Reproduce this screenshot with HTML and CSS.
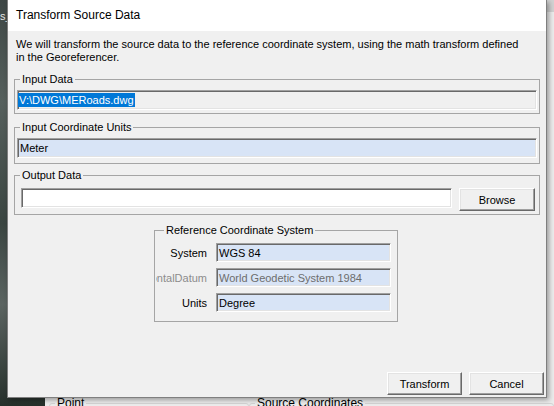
FILE: index.html
```html
<!DOCTYPE html>
<html lang="en">
    <head>
        <meta charset="UTF-8">
        <title>Transform Source Data</title>
        <link rel="stylesheet" href="styles.css">
    </head>

    <body>
        <div class="desktop">
            <span class="desk-label">s_</span>

            <div class="back-window">
                <div class="back-row">
                    <fieldset class="back-group back-point"><legend>Point</legend></fieldset>
                    <fieldset class="back-group back-source"><legend>Source Coordinates</legend></fieldset>
                </div>
            </div>

            <div class="dialog">
                <div class="titlebar">Transform Source Data</div>
                <div class="dialog-body">
                    <p class="intro">We will transform the source data to the reference coordinate system, using the math transform defined<br>in the Georeferencer.</p>

                    <fieldset class="group" id="input-data">
                        <legend>Input Data</legend>
                        <div class="textbox disabled"><span class="selected">V:\DWG\MERoads.dwg</span></div>
                    </fieldset>

                    <fieldset class="group" id="input-units">
                        <legend>Input Coordinate Units</legend>
                        <div class="textbox readonly">Meter</div>
                    </fieldset>

                    <fieldset class="group" id="output-data">
                        <legend>Output Data</legend>
                        <div class="output-row">
                            <div class="textbox"></div>
                            <button class="btn">Browse</button>
                        </div>
                    </fieldset>

                    <fieldset class="group" id="ref-system">
                        <legend>Reference Coordinate System</legend>
                        <div class="field-row">
                            <span class="field-label"><span>System</span></span>
                            <div class="textbox readonly">WGS 84</div>
                        </div>
                        <div class="field-row">
                            <span class="field-label dim"><span>HorizontalDatum</span></span>
                            <div class="textbox readonly dim">World Geodetic System 1984</div>
                        </div>
                        <div class="field-row">
                            <span class="field-label"><span>Units</span></span>
                            <div class="textbox readonly">Degree</div>
                        </div>
                    </fieldset>

                    <div class="actions">
                        <button class="btn">Transform</button>
                        <button class="btn">Cancel</button>
                    </div>
                </div>
            </div>
        </div>
    </body>
</html>
```

FILE: styles.css
```css
* {
    box-sizing: border-box;
}

body {
    margin: 0;
    font-family: "Liberation Sans", Arial, sans-serif;
    font-size: 11px;
    color: #000;
}

.desktop {
    position: relative;
    width: 554px;
    height: 406px;
    overflow: hidden;
    background: linear-gradient(180deg, #3e4745 0%, #56605d 25%, #3a4541 55%, #5b6461 75%, #26302b 100%);
}

.desk-label {
    position: absolute;
    left: 0;
    top: 10px;
    color: #e6e6e6;
}

/* window behind the dialog */
.back-window {
    position: absolute;
    left: 45px;
    top: 0;
    right: 0;
    bottom: 0;
    background-color: #ececec;
    border-top: 12px solid #d2d2d2;
}

.back-row {
    position: absolute;
    top: 385px;
    left: 4px;
    right: 0;
    display: flex;
}

.back-group {
    margin: 0;
    padding: 0;
    height: 30px;
    border: 1px solid #d4d4d4;
    border-radius: 3px;
}

.back-group legend {
    font-size: 12px;
    line-height: 13px;
    padding: 0 2px;
    margin-left: 5px;
}

.back-point {
    width: 200px;
}

.back-source {
    flex: 1;
}

/* dialog */
.dialog {
    position: absolute;
    left: 7px;
    top: 0;
    width: 540px;
    height: 398px;
    display: flex;
    flex-direction: column;
    background-color: #f0f0f0;
    border: 1px solid #7f7f7f;
    border-top: none;
    box-shadow: 2px 2px 5px rgba(0,0,0,0.35);
}

.titlebar {
    height: 31px;
    line-height: 31px;
    padding-left: 8px;
    background-color: #fff;
    font-size: 12px;
}

.dialog-body {
    flex: 1;
    display: flex;
    flex-direction: column;
    padding: 7px 2px 2px 0;
}

.intro {
    margin: 0 0 9px 8px;
    line-height: 13px;
    white-space: nowrap;
}

.group {
    margin: 0 4px 0 6px;
    border: 1px solid #a5a5a5;
    min-width: 0;
}

.group legend {
    line-height: 13px;
    padding: 0 2px;
}

#input-data {
    padding: 4px 2px 3px;
}

#input-data legend,
#input-units legend {
    margin-left: 3px;
}

#input-units {
    margin-top: 7px;
    padding: 4px 2px 5px;
}

#output-data {
    margin-top: 5px;
    padding: 6px 4px 3px 6px;
}

#output-data legend {
    margin-left: -1px;
}

#ref-system {
    margin: 9px auto 0;
    width: 244px;
    padding: 6px 6px 9px 1px;
}

#ref-system legend {
    margin-left: 8px;
}

/* sunken edit box */
.textbox {
    height: 20px;
    display: flex;
    align-items: center;
    padding-left: 2px;
    white-space: nowrap;
    overflow: hidden;
    background-color: #fff;
    border: 1px solid;
    border-color: #a0a0a0 #fff #fff #a0a0a0;
    box-shadow: inset 1px 1px 0 #696969, inset -1px -1px 0 #e3e3e3;
}

.textbox.disabled {
    background-color: #f0f0f0;
    padding-left: 0;
}

.textbox.readonly {
    background-color: #d8e4f6;
}

.textbox.dim {
    color: #6d6d6d;
}

.selected {
    background-color: #0078d7;
    color: #fff;
    line-height: 14px;
    padding: 0 1px;
}

.output-row {
    display: flex;
    align-items: flex-start;
    gap: 7px;
}

.output-row .textbox {
    flex: 1;
}

.field-row {
    display: flex;
    align-items: center;
    height: 19px;
}

.field-row + .field-row {
    margin-top: 6px;
}

.field-row .textbox {
    flex: 1;
    height: 19px;
}

.field-label {
    width: 51px;
    margin-right: 9px;
    display: flex;
    justify-content: flex-end;
    overflow: hidden;
    white-space: nowrap;
}

.field-label.dim {
    color: #8c8c8c;
}

/* raised push button */
.btn {
    width: 76px;
    height: 23px;
    padding: 0;
    font-family: inherit;
    font-size: 11px;
    color: #000;
    background-color: #f0f0f0;
    border: 1px solid;
    border-color: #fff #696969 #696969 #fff;
    box-shadow: inset -1px -1px 0 #a0a0a0, inset 1px 1px 0 #e3e3e3;
}

.actions {
    margin-top: auto;
    display: flex;
    justify-content: flex-end;
    gap: 7px;
}

.actions .btn {
    width: 75px;
}
```
